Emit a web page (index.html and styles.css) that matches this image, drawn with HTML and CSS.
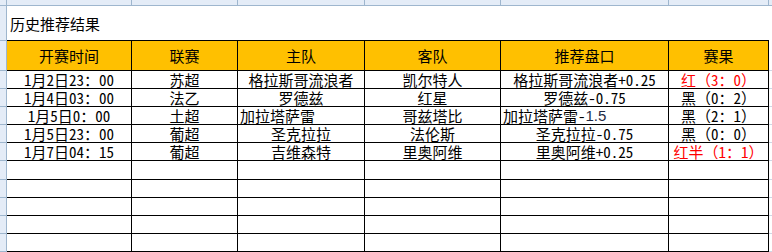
FILE: index.html
```html
<!DOCTYPE html>
<html lang="zh-CN">
<head>
<meta charset="utf-8">
<title>历史推荐结果</title>
<link rel="stylesheet" href="styles.css">
</head>
<body>
<div class="sheet">
  <div class="row colhead">
    <div class="rh corner"></div>
    <div class="ch c1"></div>
    <div class="ch c2"></div>
    <div class="ch c3"></div>
    <div class="ch c4"></div>
    <div class="ch c5"></div>
    <div class="ch c6"></div>
    <div class="gap chgap"></div>
  </div>

  <div class="row title-row">
    <div class="rh"></div>
    <div class="title">历史推荐结果</div>
    <div class="gap"></div>
  </div>

  <div class="row head">
    <div class="rh"></div>
    <div class="cell c1">开赛时间</div>
    <div class="cell c2">联赛</div>
    <div class="cell c3">主队</div>
    <div class="cell c4">客队</div>
    <div class="cell c5">推荐盘口</div>
    <div class="cell c6">赛果</div>
    <div class="gap"></div>
  </div>

  <div class="row data">
    <div class="rh"></div>
    <div class="cell c1">1月2日23<span class="fw">：</span>00</div>
    <div class="cell c2">苏超</div>
    <div class="cell c3">格拉斯哥流浪者</div>
    <div class="cell c4">凯尔特人</div>
    <div class="cell c5">格拉斯哥流浪者+0.25</div>
    <div class="cell c6 red">红<span class="fw">（</span>3<span class="fw">：</span>0<span class="fw">）</span></div>
    <div class="gap"></div>
  </div>

  <div class="row data">
    <div class="rh"></div>
    <div class="cell c1">1月4日03<span class="fw">：</span>00</div>
    <div class="cell c2">法乙</div>
    <div class="cell c3">罗德兹</div>
    <div class="cell c4">红星</div>
    <div class="cell c5">罗德兹-0.75</div>
    <div class="cell c6">黑<span class="fw">（</span>0<span class="fw">：</span>2<span class="fw">）</span></div>
    <div class="gap"></div>
  </div>

  <div class="row data">
    <div class="rh"></div>
    <div class="cell c1">1月5日0<span class="fw">：</span>00</div>
    <div class="cell c2">土超</div>
    <div class="cell c3 left">加拉塔萨雷</div>
    <div class="cell c4">哥兹塔比</div>
    <div class="cell c5 left">加拉塔萨雷-<span class="alt">1.5</span></div>
    <div class="cell c6">黑<span class="fw">（</span>2<span class="fw">：</span>1<span class="fw">）</span></div>
    <div class="gap"></div>
  </div>

  <div class="row data">
    <div class="rh"></div>
    <div class="cell c1">1月5日23<span class="fw">：</span>00</div>
    <div class="cell c2">葡超</div>
    <div class="cell c3">圣克拉拉</div>
    <div class="cell c4">法伦斯</div>
    <div class="cell c5">圣克拉拉-0.75</div>
    <div class="cell c6">黑<span class="fw">（</span>0<span class="fw">：</span>0<span class="fw">）</span></div>
    <div class="gap"></div>
  </div>

  <div class="row data">
    <div class="rh"></div>
    <div class="cell c1">1月7日04<span class="fw">：</span>15</div>
    <div class="cell c2">葡超</div>
    <div class="cell c3">吉维森特</div>
    <div class="cell c4">里奥阿维</div>
    <div class="cell c5">里奥阿维+0.25</div>
    <div class="cell c6 red">红半<span class="fw">（</span>1<span class="fw">：</span>1<span class="fw">）</span></div>
    <div class="gap"></div>
  </div>

  <div class="row data">
    <div class="rh"></div>
    <div class="cell c1"></div><div class="cell c2"></div><div class="cell c3"></div>
    <div class="cell c4"></div><div class="cell c5"></div><div class="cell c6"></div>
    <div class="gap"></div>
  </div>
  <div class="row data">
    <div class="rh"></div>
    <div class="cell c1"></div><div class="cell c2"></div><div class="cell c3"></div>
    <div class="cell c4"></div><div class="cell c5"></div><div class="cell c6"></div>
    <div class="gap"></div>
  </div>
  <div class="row data">
    <div class="rh"></div>
    <div class="cell c1"></div><div class="cell c2"></div><div class="cell c3"></div>
    <div class="cell c4"></div><div class="cell c5"></div><div class="cell c6"></div>
    <div class="gap"></div>
  </div>
  <div class="row data">
    <div class="rh"></div>
    <div class="cell c1"></div><div class="cell c2"></div><div class="cell c3"></div>
    <div class="cell c4"></div><div class="cell c5"></div><div class="cell c6"></div>
    <div class="gap"></div>
  </div>
  <div class="row data">
    <div class="rh"></div>
    <div class="cell c1"></div><div class="cell c2"></div><div class="cell c3"></div>
    <div class="cell c4"></div><div class="cell c5"></div><div class="cell c6"></div>
    <div class="gap"></div>
  </div>
</div>
</body>
</html>
```

FILE: styles.css
```css
* { box-sizing: border-box; }

html, body {
  margin: 0;
  padding: 0;
  background: #ffffff;
}

body {
  width: 772px;
  height: 252px;
  overflow: hidden;
  font-family: "Noto Sans CJK SC", "Noto Sans", sans-serif;
  font-size: 15px;
  font-feature-settings: "hwid" 1;
  color: #000000;
}

.sheet {
  display: flex;
  flex-direction: column;
  width: 772px;
}

.row {
  display: flex;
  flex: none;
}

/* Excel row header strip on the left */
.rh {
  flex: none;
  width: 7px;
  background: #e4ecf7;
  border-right: 1px solid #9eb6ce;
  border-bottom: 1px solid #9eb6ce;
}

/* grey gridline gap on the right */
.gap {
  flex: 1 1 auto;
  border-bottom: 1px solid #d0d7e5;
}

/* column header strip on top */
.colhead {
  height: 6px;
  background: #e4ecf7;
  border-bottom: 1px solid #9eb6ce;
  overflow: hidden;
}
.colhead .corner {
  border-bottom: none;
}
.ch {
  flex: none;
  border-right: 1px solid #9eb6ce;
}
.chgap {
  border-bottom: none;
}

.c1 { width: 125px; }
.c2 { width: 106px; }
.c3 { width: 127px; }
.c4 { width: 136px; }
.c5 { width: 168px; }
.c6 { width: 100px; }

/* title */
.title-row {
  height: 35px;
}
.title {
  flex: none;
  width: 762px;
  border-bottom: 1px solid #000000;
  display: flex;
  align-items: center;
  padding-left: 3px;
  padding-top: 1px;
  line-height: 16px;
}
.title-row .gap {
  border-bottom: none;
}

/* table cells */
.cell {
  flex: none;
  border-right: 1px solid #000000;
  border-bottom: 1px solid #000000;
  display: flex;
  align-items: center;
  justify-content: center;
  white-space: nowrap;
  line-height: 16px;
}

.fw {
  font-feature-settings: normal;
}

.head {
  height: 30px;
}
.head .cell {
  background: #ffc000;
  padding-top: 1px;
}

.data {
  height: 18.1px;
}
.data .cell {
  padding-top: 1px;
}

.cell.left {
  justify-content: flex-start;
  padding-left: 2px;
}

.red {
  color: #ff0000;
}

.alt {
  font-family: "Liberation Sans", sans-serif;
  font-feature-settings: normal;
  color: #1f2a44;
}
```
